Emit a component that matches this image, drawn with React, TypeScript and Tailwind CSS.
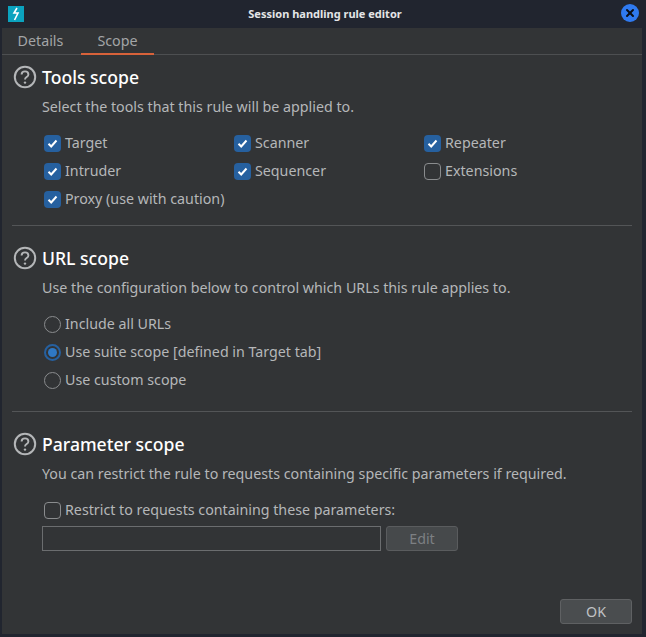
import { X } from "lucide-react";

function HelpIcon() {
  return (
    <svg width="24" height="24" viewBox="0 0 24 24" fill="none" className="shrink-0">
      <circle cx="12" cy="12" r="10.2" stroke="#b4b6b8" strokeWidth="2" />
      <path d="M8.6 9.6c0-2 1.5-3.2 3.4-3.2s3.4 1.2 3.4 3c0 2.6-3.4 2.6-3.4 5" stroke="#b4b6b8" strokeWidth="1.9" fill="none" />
      <circle cx="12" cy="17.6" r="1.2" fill="#b4b6b8" />
    </svg>
  );
}

function Check({ label, checked }: { label: string; checked?: boolean }) {
  return (
    <div className="flex h-7 items-center">
      {checked ? (
        <div className="flex h-[17px] w-[17px] items-center justify-center rounded-[4px] bg-[#26609f]">
          <svg width="11" height="11" viewBox="0 0 11 11" fill="none">
            <path d="M1.5 5.8 4.2 8.5 9.5 2.5" stroke="#ffffff" strokeWidth="2" />
          </svg>
        </div>
      ) : (
        <div className="h-[17px] w-[17px] rounded-[4px] border border-[#8a8c8e]" />
      )}
      <span className="ml-[4px] text-[14.25px] text-[#b5b7b9]">{label}</span>
    </div>
  );
}

function Radio({ label, checked }: { label: string; checked?: boolean }) {
  return (
    <div className="flex h-7 items-center">
      {checked ? (
        <div className="flex h-[17px] w-[17px] items-center justify-center rounded-full border-2 border-[#26609f]">
          <div className="h-[9px] w-[9px] rounded-full bg-[#2f78c4]" />
        </div>
      ) : (
        <div className="h-[17px] w-[17px] rounded-full border border-[#8a8c8e]" />
      )}
      <span className="ml-[4px] text-[14.25px] text-[#b5b7b9]">{label}</span>
    </div>
  );
}

function SectionHead({ title, text }: { title: string; text: string }) {
  return (
    <>
      <div className="flex h-6 items-center gap-[5px]">
        <HelpIcon />
        <h2 className="text-[17.6px] font-medium text-white">{title}</h2>
      </div>
      <p className="mt-[6px] ml-[29px] h-6 text-[14.25px] leading-6 text-[#b5b7b9]">{text}</p>
    </>
  );
}

export default function App() {
  return (
    <div className="flex h-[637px] w-[646px] flex-col overflow-hidden bg-[#21252f] font-['Noto_Sans',sans-serif]">
      <div className="relative flex h-7 shrink-0 items-center justify-center pl-[4px]">
        <div className="absolute left-2 top-[6px] flex h-4 w-4 items-center justify-center bg-[#0ba3bf]">
          <svg width="10" height="14" viewBox="0 0 10 14" fill="none">
            <path d="M6 1 3 6h4L3.500 13" stroke="#ffffff" strokeWidth="1.6" />
          </svg>
        </div>
        <span className="text-[11px] font-bold text-[#e4e5e7]">Session handling rule editor</span>
        <div className="absolute right-[7px] top-1 flex h-[18px] w-[18px] items-center justify-center rounded-full bg-[#2f7af0]">
          <X size={12} strokeWidth={4} color="#0b0f18" />
        </div>
      </div>

      <div className="ml-[2px] mr-[4px] mb-[3px] flex grow flex-col bg-[#323436]">
        <div className="flex h-[27px] shrink-0 border-b border-[#4d4f51] pl-[3px]">
          <div className="flex w-[71px] items-center justify-center pb-[1px] text-[14.25px] text-[#a3a5a7]">Details</div>
          <div className="ml-[5px] flex h-[27px] w-[73px] items-center justify-center border-b-2 border-[#d8623a] text-[14.25px] text-[#a3a5a7]">Scope</div>
        </div>

        <div className="flex grow flex-col px-[10px] pt-[10px]">
          <section className="border-b border-[#535557] pb-[12px]">
            <div className="ml-[1px]">
              <SectionHead title="Tools scope" text="Select the tools that this rule will be applied to." />
            </div>
            <div className="mt-[10px] ml-[32px] grid grid-cols-[190px_190px_190px]">
              <Check label="Target" checked />
              <Check label="Scanner" checked />
              <Check label="Repeater" checked />
              <Check label="Intruder" checked />
              <Check label="Sequencer" checked />
              <Check label="Extensions" />
              <Check label="Proxy (use with caution)" checked />
            </div>
          </section>

          <section className="border-b border-[#535557] pt-[20px] pb-[17px]">
            <div className="ml-[1px]">
              <SectionHead title="URL scope" text="Use the configuration below to control which URLs this rule applies to." />
            </div>
            <div className="mt-[10px] ml-[32px] flex flex-col">
              <Radio label="Include all URLs" />
              <Radio label="Use suite scope [defined in Target tab]" checked />
              <Radio label="Use custom scope" />
            </div>
          </section>

          <section className="pt-[20px]">
            <div className="ml-[1px]">
              <SectionHead title="Parameter scope" text="You can restrict the rule to requests containing specific parameters if required." />
            </div>
            <div className="mt-[10px] ml-[32px]">
              <Check label="Restrict to requests containing these parameters:" />
            </div>
            <div className="mt-[2px] ml-[30px] flex items-start gap-[5px]">
              <div className="h-[25px] w-[339px] border border-[#6b6d6f]" />
              <div className="flex h-[25px] w-[72px] items-center justify-center rounded-[3px] border border-[#5a5c5e] bg-[#46494b] text-[14.25px] text-[#7d8083]">Edit</div>
            </div>
          </section>

          <div className="mt-auto mb-[10px] flex justify-end pr-0">
            <div className="flex h-[25px] w-[72px] items-center justify-center rounded-[3px] border border-[#5f6163] bg-[#4a4d4f] text-[14.25px] text-[#c0c2c4]">OK</div>
          </div>
        </div>
      </div>
    </div>
  );
}
